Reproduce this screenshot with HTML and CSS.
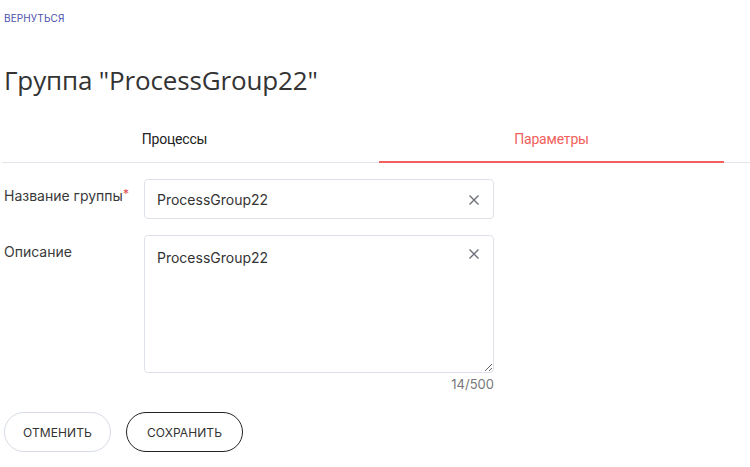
FILE: index.html
```html
<!DOCTYPE html>
<html lang="ru">
<head>
    <meta charset="UTF-8">
    <meta name="viewport" content="width=device-width, initial-scale=1.0">
    <title>Группа</title>
    <link rel="stylesheet" href="styles.css">
</head>
<body>
    <div class="page">
        <a class="back-link" href="#">Вернуться</a>
        <h1 class="title">Группа "ProcessGroup22"</h1>

        <div class="tabs">
            <div class="tab">Процессы</div>
            <div class="tab active">Параметры</div>
        </div>

        <form class="form">
            <div class="form-row">
                <label class="label">Название группы<span class="req">*</span></label>
                <div class="field">
                    <input class="input" type="text" value="ProcessGroup22">
                    <svg class="clear" width="10" height="10" viewBox="0 0 10 10"><path d="M0.5 0.5L9.5 9.5M9.5 0.5L0.5 9.5" stroke="#6b6f78" stroke-width="1.4"/></svg>
                </div>
            </div>
            <div class="form-row">
                <label class="label">Описание</label>
                <div class="field-wrap">
                    <div class="field">
                        <textarea class="textarea">ProcessGroup22</textarea>
                        <svg class="clear clear-top" width="10" height="10" viewBox="0 0 10 10"><path d="M0.5 0.5L9.5 9.5M9.5 0.5L0.5 9.5" stroke="#6b6f78" stroke-width="1.4"/></svg>
                    </div>
                    <div class="counter">14/500</div>
                </div>
            </div>
            <div class="buttons">
                <button type="button" class="btn btn-cancel">Отменить</button>
                <button type="button" class="btn btn-save">Сохранить</button>
            </div>
        </form>
    </div>
</body>
</html>
```

FILE: styles.css
```css
body {
    margin: 0;
    font-family: Inter, "Noto Sans", sans-serif;
    color: #333;
    background: #fff;
}
.page {
    padding: 12px 0 0 4px;
}
.back-link {
    display: block;
    font-size: 10px;
    line-height: 13px;
    text-transform: uppercase;
    letter-spacing: 0.1px;
    color: #4b4fae;
    text-decoration: none;
}
.title {
    margin: 38px 0 0 0;
    font-family: "Open Sans", sans-serif;
    font-size: 26px;
    line-height: 34px;
    font-weight: 500;
    letter-spacing: -0.15px;
    color: #333;
}
.tabs {
    display: grid;
    grid-template-columns: 345px 345px;
    column-gap: 32px;
    margin: 27px 0 0 -2px;
    border-bottom: 1px solid #e4e4ec;
}
.tab {
    text-align: center;
    font-family: "Roboto", sans-serif;
    font-size: 14px;
    line-height: 20px;
    padding: 5px 0 12px;
    color: #222;
    letter-spacing: -0.2px;
    margin-bottom: -1px;
    border-bottom: 2px solid transparent;
}
.tab.active {
    color: #f25f5c;
    border-bottom-color: #f25f5c;
}
.form {
    margin-top: 16px;
}
.form-row {
    display: flex;
    margin-bottom: 16px;
}
.label {
    width: 140px;
    font-size: 14px;
    line-height: 20px;
    padding-top: 7px;
    color: #3a3a3a;
}
.req {
    color: #e5484d;
    font-size: 12px;
    vertical-align: top;
    position: relative;
    top: -2px;
}
.field-wrap {
    display: flex;
    flex-direction: column;
}
.field {
    position: relative;
    width: 350px;
}
.input, .textarea {
    box-sizing: border-box;
    width: 350px;
    border: 1px solid #dde1e8;
    border-radius: 4px;
    font-family: Inter, "Noto Sans", sans-serif;
    font-size: 14px;
    color: #333;
    padding: 0 36px 0 12px;
    outline: none;
}
.input {
    height: 40px;
}
.textarea {
    display: block;
    height: 138px;
    padding-top: 12px;
    resize: vertical;
    line-height: 20px;
}
.clear {
    position: absolute;
    right: 15px;
    top: 16px;
}
.clear-top {
    top: 14px;
}
.counter {
    text-align: right;
    font-size: 13px;
    color: #777;
    margin-top: 3px;
}
.buttons {
    display: flex;
    gap: 15px;
    margin-top: 20px;
}
.btn {
    height: 40px;
    border-radius: 20px;
    background: #fff;
    font-family: Inter, "Noto Sans", sans-serif;
    font-size: 12px;
    text-transform: uppercase;
    letter-spacing: 0.1px;
    color: #333;
    padding: 0 18px;
    cursor: pointer;
}
.btn-cancel {
    border: 1px solid #d5dae6;
}
.btn-save {
    border: 1px solid #222;
    padding: 0 20px;
}
```
